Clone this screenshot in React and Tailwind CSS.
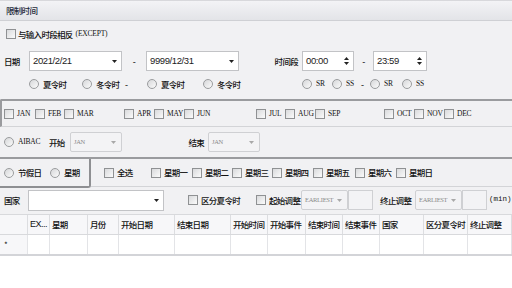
import React from 'react';

const cjk = "font-['SimSun','Noto_Sans_CJK_SC',sans-serif]";
const latin = "font-['Liberation_Serif',serif] text-[7.5px] tracking-[-0.2px]";
const zh = 'text-[8.5px] tracking-[-0.7px] font-medium';

const Box = () => (
  <span className="inline-block w-[10px] h-[10px] shrink-0 border border-[#8f9193] bg-gradient-to-br from-[#d9dadc] to-[#fbfbfb]" />
);

const Radio = () => (
  <span className="inline-block w-[10px] h-[10px] shrink-0 rounded-full border border-[#9a9c9e] bg-gradient-to-br from-[#d6d7d9] to-[#fbfbfb]" />
);

const Check = ({ label, w, serif }) => (
  <div className={`flex items-center shrink-0 ${w}`}>
    <Box />
    <span className={`ml-[3px] ${serif ? latin : zh} text-[#111]`}>{label}</span>
  </div>
);

const RadioItem = ({ label, w, serif }) => (
  <div className={`flex items-center shrink-0 ${w}`}>
    <Radio />
    <span className={`ml-[4px] ${serif ? latin : zh} text-[#111]`}>{label}</span>
  </div>
);

const DropArrow = ({ dim }) => (
  <svg width="5" height="3" viewBox="0 0 5 3" className="shrink-0">
    <path d="M0 0h5L2.5 3z" fill={dim ? '#a8a8a8' : '#222'} />
  </svg>
);

const Spin = () => (
  <div className="flex flex-col items-center gap-[2px] shrink-0">
    <svg width="5" height="3" viewBox="0 0 5 3"><path d="M0 3h5L2.5 0z" fill="#222" /></svg>
    <svg width="5" height="3" viewBox="0 0 5 3"><path d="M0 0h5L2.5 3z" fill="#222" /></svg>
  </div>
);

const Field = ({ value, w, spin }) => (
  <div className={`${w} h-[20px] flex items-center justify-between pl-[3px] pr-[4px] bg-white border border-[#c2c3c6] shrink-0`}>
    <span className="font-['Liberation_Sans',sans-serif] text-[9.5px] tracking-[-0.4px] text-[#1b1b1b]">{value}</span>
    {spin ? <Spin /> : <DropArrow />}
  </div>
);

const DimSelect = ({ value, w }) => (
  <div className={`${w} h-[20px] flex items-center justify-between pl-[3px] pr-[5px] bg-[#f3f3f5] border border-[#cfd0d3] rounded-[2px] shrink-0`}>
    <span className="font-['Liberation_Serif',serif] text-[6.5px] tracking-[-0.3px] text-[#8a8a8a]">{value}</span>
    <DropArrow dim />
  </div>
);

const months = [
  ['JAN', 'w-[31px]'], ['FEB', 'w-[29px]'], ['MAR', 'w-[60px]'],
  ['APR', 'w-[30px]'], ['MAY', 'w-[30px]'], ['JUN', 'w-[72px]'],
  ['JUL', 'w-[29px]'], ['AUG', 'w-[30px]'], ['SEP', 'w-[69px]'],
  ['OCT', 'w-[30px]'], ['NOV', 'w-[30px]'], ['DEC', 'w-[40px]'],
];

const days = [
  ['全选', 'w-[47px]'], ['星期一', 'w-[41px]'], ['星期二', 'w-[40px]'], ['星期三', 'w-[40px]'],
  ['星期四', 'w-[41px]'], ['星期五', 'w-[42px]'], ['星期六', 'w-[41px]'], ['星期日', 'w-[50px]'],
];

const cols = [
  ['', 'w-[28px]'], ['EX...', 'w-[22px]'], ['星期', 'w-[38px]'], ['月份', 'w-[31px]'],
  ['开始日期', 'w-[56px]'], ['结束日期', 'w-[56px]'], ['开始时间', 'w-[37px]'], ['开始事件', 'w-[38px]'],
  ['结束时间', 'w-[37px]'], ['结束事件', 'w-[37px]'], ['国家', 'w-[44px]'], ['区分夏令时', 'w-[44px]'],
  ['终止调整', 'w-[44px]'],
];

export default function App() {
  return (
    <div className={`w-[512px] h-[288px] overflow-hidden bg-[#f1f1f3] text-[#111] whitespace-nowrap ${cjk}`}>
      {/* title band */}
      <div className="h-[21px] flex items-center pl-[6px] border-t border-[#d8d8dc] border-b border-b-[#cfd0d4] bg-gradient-to-b from-[#f3f3f6] to-[#e3e4e8]">
        <span className={`${zh} text-[#1e2a3a]`}>限制时间</span>
      </div>

      <div className="h-[16px] mt-[5px] pl-[6px] flex items-center">
        <Box />
        <span className={`ml-[2px] ${zh}`}>与输入时段相反</span>
        <span className={`ml-[3px] ${latin}`}>(EXCEPT)</span>
      </div>

      {/* date / time row */}
      <div className="h-[20px] mt-[9px] flex items-center">
        <span className={`w-[29px] pl-[4px] ${zh} shrink-0`}>日期</span>
        <Field value="2021/2/21" w="w-[93px]" />
        <span className={`w-[24px] text-center ${zh} shrink-0`}>-</span>
        <Field value="9999/12/31" w="w-[93px]" />
        <span className={`w-[63px] text-right pr-[4px] ${zh} shrink-0`}>时间段</span>
        <Field value="00:00" w="w-[52px]" spin />
        <span className={`w-[19px] text-center ${zh} shrink-0`}>-</span>
        <Field value="23:59" w="w-[54px]" spin />
      </div>

      <div className="h-[14px] mt-[6px] flex items-center pl-[29px]">
        <RadioItem label="夏令时" w="w-[53px]" />
        <RadioItem label="冬令时" w="w-[43px]" />
        <span className={`w-[22px] ${zh} shrink-0`}>-</span>
        <RadioItem label="夏令时" w="w-[56px]" />
        <RadioItem label="冬令时" w="w-[99px]" />
        <RadioItem label="SR" w="w-[30px]" serif />
        <RadioItem label="SS" w="w-[29px]" serif />
        <span className={`w-[9px] ${zh} shrink-0`}>-</span>
        <RadioItem label="SR" w="w-[32px]" serif />
        <RadioItem label="SS" w="w-[30px]" serif />
      </div>

      {/* months group */}
      <div className="mt-[8px] h-[28px] border-t-2 border-t-[#9a9b9e] border-l-2 border-l-[#9a9b9e] border-b border-b-[#d3d4d7] rounded-tl-[2px] flex items-center pl-[2px]">
        {months.map(([m, w]) => <Check key={m} label={m} w={w} serif />)}
      </div>

      {/* AIBAC row */}
      <div className="h-[30px] flex items-center pl-[4px]">
        <RadioItem label="AIBAC" w="w-[45px]" serif />
        <span className={`w-[21px] ${zh} shrink-0`}>开始</span>
        <DimSelect value="JAN" w="w-[52px]" />
        <span className={`w-[86px] text-right pr-[4px] ${zh} shrink-0`}>结束</span>
        <DimSelect value="JAN" w="w-[52px]" />
      </div>

      {/* week group */}
      <div className="h-[30px] border-t-2 border-[#9a9b9e] border-b border-b-[#d3d4d7] flex">
        <div className="w-[91px] h-[29px] border-r-2 border-b-2 border-[#8e8f92] rounded-br-[3px] flex items-center pl-[4px] shrink-0">
          <RadioItem label="节假日" w="w-[46px]" />
          <RadioItem label="星期" w="w-[38px]" />
        </div>
        <div className="flex items-center pl-[13px]">
          {days.map(([d, w]) => <Check key={d} label={d} w={w} />)}
        </div>
      </div>

      {/* country row */}
      <div className="h-[26px] flex items-center">
        <span className={`w-[28px] pl-[4px] ${zh} shrink-0`}>国家</span>
        <div className="w-[136px] h-[21px] bg-white border border-[#c2c3c6] flex items-center justify-end pr-[4px] shrink-0">
          <DropArrow />
        </div>
        <div className="w-[24px] shrink-0" />
        <Check label="区分夏令时" w="w-[68px]" />
        <Check label="起始调整" w="w-[45px]" />
        <DimSelect value="EARLIEST" w="w-[47px]" />
        <div className="w-[25px] h-[20px] bg-[#f3f3f5] border border-[#cfd0d3] shrink-0" />
        <span className={`w-[42px] pl-[7px] ${zh} shrink-0`}>终止调整</span>
        <DimSelect value="EARLIEST" w="w-[47px]" />
        <div className="w-[25px] h-[20px] bg-[#f3f3f5] border border-[#cfd0d3] shrink-0" />
        <span className="ml-[2px] font-['Liberation_Mono',monospace] text-[7.5px]">(min)</span>
      </div>

      {/* grid */}
      <div className="mt-[1px] bg-white">
        <div className="h-[21px] flex bg-[#f7f7f9] border-y border-[#d8d9dc]">
          {cols.map(([c, w], i) => (
            <div key={i} className={`${w} shrink-0 h-full flex items-center pl-[2px] border-r border-[#dcdde0] overflow-hidden ${c === 'EX...' ? "font-['Liberation_Sans',sans-serif] text-[9px] tracking-[-0.5px]" : zh}`}>{c}</div>
          ))}
        </div>
        <div className="h-[21px] flex border-b-2 border-[#d3d4d8]">
          {cols.map(([c, w], i) => (
            <div key={i} className={`${w} shrink-0 h-full flex items-center pl-[4px] border-r border-[#e3e4e7] ${i === 0 ? 'bg-[#f7f7f9]' : ''}`}>
              {i === 0 && <span className="text-[8px] leading-none">*</span>}
            </div>
          ))}
        </div>
        <div className="h-[40px] bg-white" />
      </div>
    </div>
  );
}
